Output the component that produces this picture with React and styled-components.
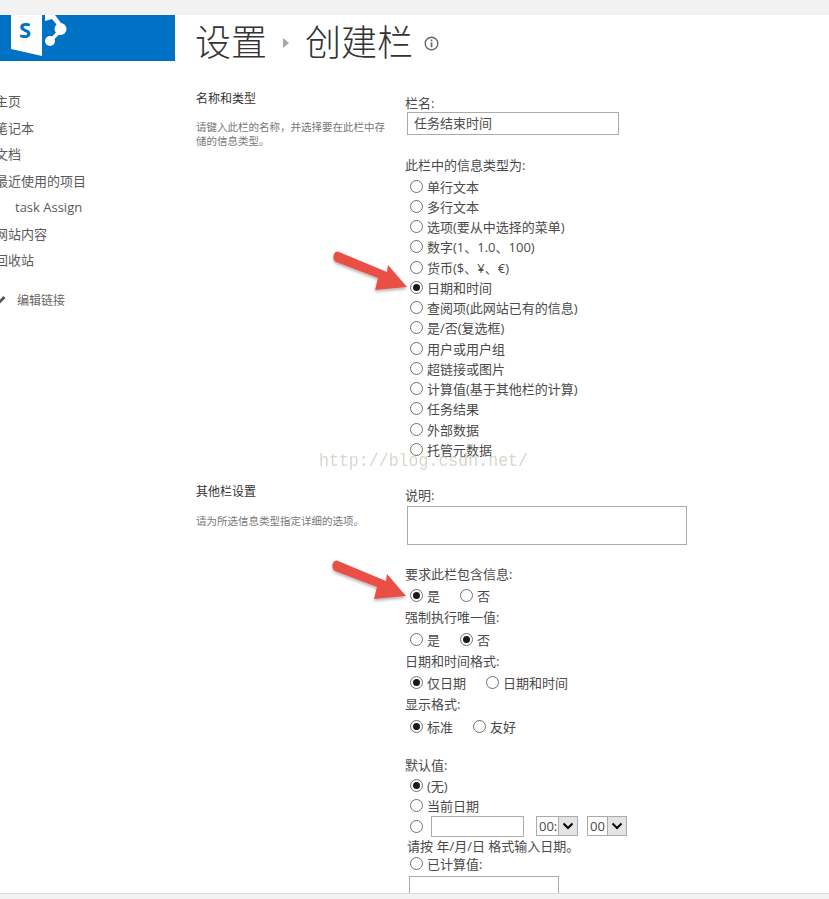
import React from 'react';
import styled, { createGlobalStyle } from 'styled-components';

const Global = createGlobalStyle`
  html, body { margin: 0; padding: 0; background: #fff; }
  body {
    font-family: "Open Sans", "Noto Sans CJK SC", sans-serif;
    color: #4a4a4a;
    font-size: 13px;
    overflow: hidden;
  }
`;

const Page = styled.div`
  position: relative;
  width: 829px;
  height: 899px;
  overflow: hidden;
  display: flex;
  flex-direction: column;
`;

const TopBar = styled.div`
  flex: 0 0 15px;
  background: #f2f2f2;
`;

const BottomBar = styled.div`
  position: absolute;
  left: 0;
  right: 0;
  bottom: 0;
  height: 5px;
  background: #f2f2f2;
  border-top: 1px solid #dcdcdc;
`;

const Body = styled.div`
  display: flex;
  flex: 1;
  min-height: 0;
`;

const Side = styled.aside`
  flex: 0 0 196px;
`;

const Logo = styled.div`
  width: 175px;
  height: 46px;
  background: #0072c6;
  overflow: hidden;
`;

const Nav = styled.ul`
  list-style: none;
  margin: 27px 0 0 -5px;
  padding: 0;
`;

const NavItem = styled.li`
  height: 26.55px;
  line-height: 26.55px;
  font-size: 13px;
  color: #5a5a5a;
  white-space: nowrap;
  padding-left: ${p => (p.$sub ? 20 : 0)}px;
`;

const EditLink = styled.div`
  display: flex;
  align-items: center;
  gap: 9px;
  margin-top: 13px;
  font-size: 12px;
  color: #666;
  height: 26px;
`;

const Main = styled.main`
  flex: 1;
  min-width: 0;
`;

const Title = styled.h1`
  display: flex;
  align-items: center;
  margin: -3px 0 0 -1px;
  height: 55px;
  font-weight: 300;
  font-size: 36px;
  color: #333;
  font-family: "Noto Sans CJK SC", sans-serif;
`;

const Crumb = styled.span`
  width: 0;
  height: 0;
  margin: 6px 16px 0 16px;
  border-left: 6px solid #a6a6a6;
  border-top: 5px solid transparent;
  border-bottom: 5px solid transparent;
`;

const Info = styled.svg`
  margin: 8px 0 0 11px;
`;

const Section = styled.section`
  display: grid;
  grid-template-columns: 209px 1fr;
  margin-top: ${p => p.$mt}px;
`;

const SecHead = styled.h3`
  margin: ${p => p.$mt || 0}px 0 0;
  font-size: 12px;
  font-weight: 400;
  line-height: 17px;
  color: #333;
`;

const SecNote = styled.p`
  margin: ${p => p.$mt}px 0 0;
  width: 194px;
  font-size: 10.5px;
  line-height: 14px;
  color: #777;
`;

const FieldColumn = styled.div`
  padding-top: ${p => p.$pt || 0}px;
`;

const Label = styled.div`
  font-size: 13px;
  height: ${p => p.$h || 19}px;
  line-height: 19px;
  margin-top: ${p => p.$mt || 0}px;
  margin-left: ${p => p.$ml || 0}px;
`;

const TextBox = styled.div`
  box-sizing: border-box;
  width: ${p => p.$w}px;
  height: ${p => p.$h}px;
  margin-left: ${p => p.$ml || 0}px;
  margin-top: ${p => p.$mt || 0}px;
  border: 1px solid #ababab;
  background: #fff;
  padding-left: 6px;
  line-height: 20px;
  font-size: 13px;
`;

const RadioList = styled.div`
  display: flex;
  flex-direction: column;
  padding-left: 5px;
`;

const Row = styled.div`
  display: flex;
  align-items: center;
  height: ${p => p.$h || 20.25}px;
  white-space: nowrap;
`;

const Dot = styled.span`
  box-sizing: border-box;
  flex: 0 0 13px;
  width: 13px;
  height: 13px;
  margin-right: ${p => p.$mr || 4}px;
  border-radius: 50%;
  border: 1px solid #707070;
  background: #fff;
  display: flex;
  align-items: center;
  justify-content: center;
  &::after {
    content: '';
    display: ${p => (p.$on ? 'block' : 'none')};
    width: 7px;
    height: 7px;
    border-radius: 50%;
    background: #1a1a1a;
  }
`;

const Option = styled.span`
  display: inline-flex;
  align-items: center;
  margin-right: ${p => p.$mr || 0}px;
`;

const TimeSelect = styled.div`
  box-sizing: border-box;
  display: flex;
  align-items: center;
  justify-content: space-between;
  width: ${p => p.$w}px;
  height: 20px;
  margin-left: ${p => p.$ml}px;
  padding-left: 2px;
  border: 1px solid #ababab;
  font-size: 13px;
`;

const SelectArrow = styled.span`
  display: flex;
  align-items: center;
  justify-content: center;
  width: 18px;
  height: 18px;
  background: #e4e4e4;
  border-left: 1px solid #ababab;
`;

const Watermark = styled.div`
  position: absolute;
  left: 319px;
  top: 451px;
  font-family: "Liberation Mono", monospace;
  font-size: 16.5px;
  letter-spacing: 0.05px;
  line-height: 20px;
  color: rgba(190, 185, 170, 0.6);
  white-space: nowrap;
  transform: scaleY(1.15);
`;

const ArrowSvg = styled.svg`
  position: absolute;
  left: ${p => p.$x}px;
  top: ${p => p.$y}px;
`;

const types = [
  '单行文本', '多行文本', '选项(要从中选择的菜单)', '数字(1、1.0、100)', '货币($、¥、€)',
  '日期和时间', '查阅项(此网站已有的信息)', '是/否(复选框)', '用户或用户组', '超链接或图片',
  '计算值(基于其他栏的计算)', '任务结果', '外部数据', '托管元数据',
];

const navItems = ['主页', '笔记本', '文档', '最近使用的项目', 'task Assign', '网站内容', '回收站'];

const Arrow = ({ x, y }) => (
  <ArrowSvg $x={x} $y={y} width="84" height="50" viewBox="0 0 84 50">
    <defs>
      <filter id="sh" x="-20%" y="-20%" width="140%" height="150%">
        <feDropShadow dx="0" dy="2" stdDeviation="1.5" floodColor="#000" floodOpacity="0.3" />
      </filter>
    </defs>
    <path
      d="M5 5 C6 3 8 2 10 3 L58 23 L59 16 L78 38 L46 41 L49 29 L7 13 C4 11 4 8 5 5 Z"
      fill="#ea4f45"
      filter="url(#sh)"
    />
  </ArrowSvg>
);

const SpLogo = () => (
  <svg width="60" height="46" viewBox="0 0 60 46" style={{ marginLeft: 11, display: 'block' }}>
    <path d="M0 0 H31 V41 L0 34 Z" fill="#fff" />
    <text x="8" y="23" fontFamily="Open Sans, sans-serif" fontWeight="700" fontSize="22" fill="#0072c6">S</text>
    <path d="M34 0 H44 L50 8 L46 10 L41 4 L34 6 Z" fill="#fff" />
    <path d="M48 17 L39 26" fill="none" stroke="#fff" strokeWidth="3.5" />
    <circle cx="49.5" cy="14" r="6" fill="#fff" />
    <circle cx="39" cy="26" r="5" fill="#fff" />
  </svg>
);

function Chevron() {
  return (
    <svg width="12" height="8" viewBox="0 0 12 8">
      <path d="M1.5 1.5 L6 6 L10.5 1.5" fill="none" stroke="#000" strokeWidth="2" />
    </svg>
  );
}

const PairRow = ({ first, second, on }) => (
  <RadioList>
    <Row $h={24.6}>
      <Option $mr={20}><Dot $on={on === 0} />{first}</Option>
      <Option><Dot $on={on === 1} />{second}</Option>
    </Row>
  </RadioList>
);

export default function App() {
  return (
    <Page>
      <Global />
      <TopBar />
      <Body>
        <Side>
          <Logo><SpLogo /></Logo>
          <Nav>
            {navItems.map(n => (
              <NavItem key={n} $sub={n === 'task Assign'}>{n}</NavItem>
            ))}
            <EditLink>
              <svg width="13" height="13" viewBox="0 0 13 13">
                <path d="M3 8.5 L8.5 3 L10.5 5 L5 10.5 L2.5 11 Z" fill="#555" />
              </svg>
              编辑链接
            </EditLink>
          </Nav>
        </Side>
        <Main>
          <Title>
            设置<Crumb />创建栏
            <Info width="15" height="15" viewBox="0 0 15 15">
              <circle cx="7.5" cy="7.5" r="6.3" fill="none" stroke="#666" strokeWidth="1.4" />
              <rect x="6.7" y="6.4" width="1.7" height="4.8" fill="#666" />
              <rect x="6.7" y="3.6" width="1.7" height="1.7" fill="#666" />
            </Info>
          </Title>
          <Section $mt={22}>
            <div>
              <SecHead $mt={1}>名称和类型</SecHead>
              <SecNote $mt={13}>请键入此栏的名称，并选择要在此栏中存储的信息类型。</SecNote>
            </div>
            <FieldColumn $pt={5}>
              <Label $h={18}>栏名:</Label>
              <TextBox $w={212} $h={23} $ml={2}>任务结束时间</TextBox>
              <Label $h={20} $mt={21}>此栏中的信息类型为:</Label>
              <RadioList>
                {types.map(t => (
                  <Row key={t}>
                    <Dot $on={t === '日期和时间'} />
                    {t}
                  </Row>
                ))}
              </RadioList>
            </FieldColumn>
          </Section>
          <Section $mt={21}>
            <div>
              <SecHead $mt={2}>其他栏设置</SecHead>
              <SecNote $mt={14}>请为所选信息类型指定详细的选项。</SecNote>
            </div>
            <FieldColumn>
              <Label $h={20} $mt={5}>说明:</Label>
              <TextBox $w={280} $h={39} $ml={2} />
              <Label $mt={20}>要求此栏包含信息:</Label>
              <PairRow first="是" second="否" on={0} />
              <Label>强制执行唯一值:</Label>
              <PairRow first="是" second="否" on={1} />
              <Label>日期和时间格式:</Label>
              <PairRow first="仅日期" second="日期和时间" on={0} />
              <Label>显示格式:</Label>
              <PairRow first="标准" second="友好" on={0} />
              <Label $mt={17} $h={20}>默认值:</Label>
              <RadioList>
                <Row $h={20}><Dot $on />(无)</Row>
                <Row $h={20}><Dot />当前日期</Row>
                <Row $h={21}>
                  <Dot $mr={8} />
                  <TextBox $w={93} $h={21} />
                  <TimeSelect $w={42} $ml={12}>00:<SelectArrow><Chevron /></SelectArrow></TimeSelect>
                  <TimeSelect $w={40} $ml={9}>00<SelectArrow><Chevron /></SelectArrow></TimeSelect>
                </Row>
              </RadioList>
              <Label $h={17} $ml={2}>请按 年/月/日 格式输入日期。</Label>
              <RadioList>
                <Row $h={19}><Dot />已计算值:</Row>
              </RadioList>
              <TextBox $w={150} $h={24} $ml={4} $mt={3} />
            </FieldColumn>
          </Section>
        </Main>
      </Body>
      <Watermark>http://blog.csdn.net/</Watermark>
      <Arrow x={329} y={249} />
      <Arrow x={328} y={558} />
      <BottomBar />
    </Page>
  );
}
